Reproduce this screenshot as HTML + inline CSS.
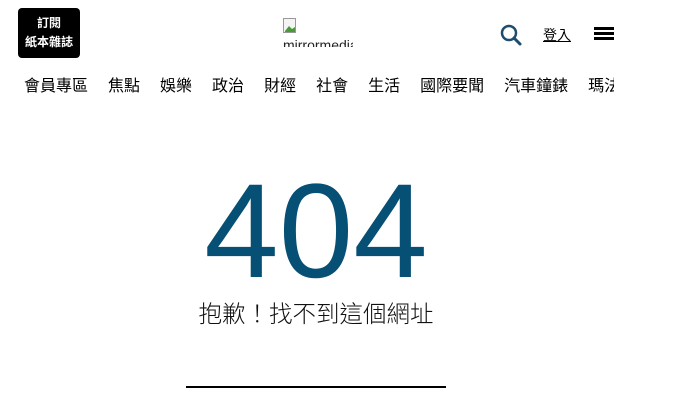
<!DOCTYPE html>
<html><head><meta charset="utf-8"><style>
body{margin:0;width:682px;height:414px;background:#fff;position:relative;overflow:hidden;font-family:"Liberation Sans","Noto Sans CJK TC",sans-serif;}
.sub{position:absolute;left:18px;top:8px;width:62px;height:50px;background:#000;border-radius:4px;color:#fff;font-size:12px;font-weight:bold;text-align:center;line-height:19px;padding-top:6px;box-sizing:border-box;}
.logo{position:absolute;left:283px;top:18px;width:70px;height:29px;overflow:hidden;font-size:14px;color:#222;}
.nav{position:absolute;top:72px;left:24px;width:590px;overflow:hidden;white-space:nowrap;font-size:16px;color:#000;}
.nav span{margin-right:20px;}
.big{position:absolute;left:0;width:632px;text-align:center;top:152px;font-size:134px;color:#064f75;line-height:160px;}
.msg{position:absolute;left:0;width:632px;text-align:center;top:295px;font-size:23.5px;color:#111;font-weight:300;}
.line{position:absolute;left:186px;top:386px;width:260px;height:2px;background:#000;}
</style></head><body>
<div class="sub">訂閱<br>紙本雜誌</div>
<div class="logo"><svg width="15" height="16" style="display:block"><rect x="0.5" y="0.5" width="12" height="14" fill="#f4f4f4" stroke="#999"/><path d="M2 13 L6 8 L9 11 L12 9 L12 14 L2 14Z" fill="#4a9a3a"/></svg><div style="margin-top:3px">mirrormedia</div></div>
<svg style="position:absolute;left:499px;top:23px" width="24" height="24" viewBox="0 0 24 24"><circle cx="10" cy="10" r="7" fill="none" stroke="#1c4d6e" stroke-width="2.5"/><path d="M15 15 L21 21" stroke="#1c4d6e" stroke-width="3" stroke-linecap="round"/></svg>
<div style="position:absolute;left:543px;top:25px;font-size:14px;text-decoration:underline;color:#000">登入</div>
<div style="position:absolute;left:594px;top:27px;width:20px;height:3px;background:#000;box-shadow:0 5px 0 #000,0 10px 0 #000"></div>
<div class="nav"><span>會員專區</span><span>焦點</span><span>娛樂</span><span>政治</span><span>財經</span><span>社會</span><span>生活</span><span>國際要聞</span><span>汽車鐘錶</span><span>瑪法達</span></div>
<div class="big">404</div>
<div class="msg">抱歉！找不到這個網址</div>
<div class="line"></div>
</body></html>
